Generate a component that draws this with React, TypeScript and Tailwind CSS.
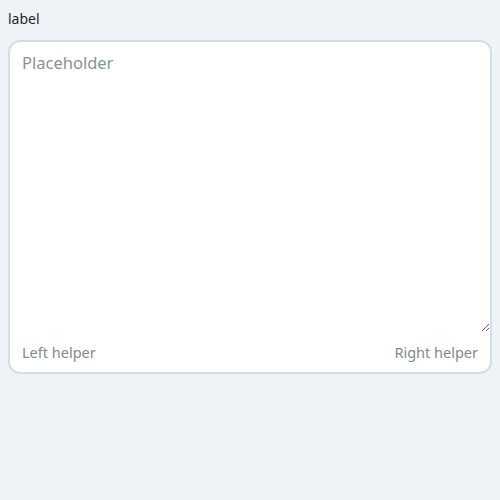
export default function App() {
  return (
    <div className="min-h-screen bg-[#eff3f7] p-2 font-['Noto_Sans',sans-serif]">
      <div className="flex flex-col gap-[10px]">
        <label className="text-[14px] leading-[22px] text-[#1f2429]">label</label>
        <div className="flex flex-col rounded-xl border-2 border-[#d3dfe6] bg-white">
          <textarea
            placeholder="Placeholder"
            className="h-[290px] w-full resize-y rounded-t-xl bg-transparent px-3 pt-[9px] text-[16.5px] leading-6 text-[#1f2429] outline-none placeholder:text-[#87929c]"
          />
          <div className="flex justify-between px-3 pt-[10px] pb-[10px] text-[14.5px] leading-5 text-[#7f8a93]">
            <span>Left helper</span>
            <span>Right helper</span>
          </div>
        </div>
      </div>
    </div>
  );
}
